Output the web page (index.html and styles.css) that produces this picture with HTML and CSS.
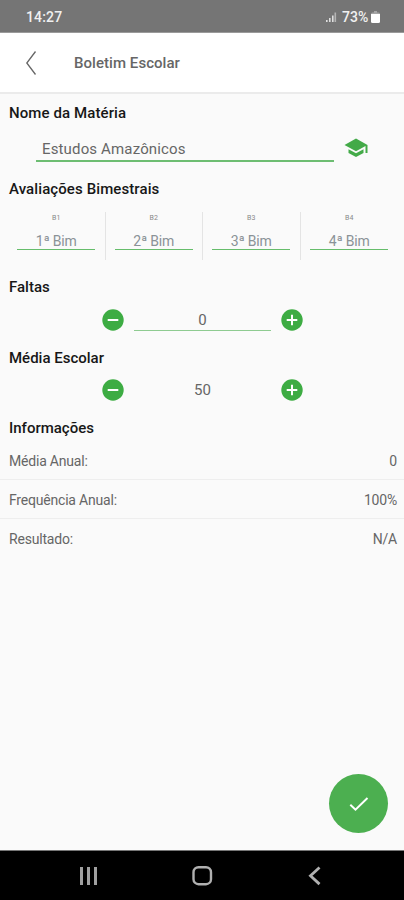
FILE: index.html
```html
<!DOCTYPE html>
<html lang="pt-BR">
<head>
<meta charset="utf-8">
<meta name="viewport" content="width=device-width, initial-scale=1">
<title>Boletim Escolar</title>
<link rel="stylesheet" href="styles.css">
</head>
<body>
<div class="status">
  <span class="clock">14:27</span>
  <svg class="signal" width="12" height="12" viewBox="0 0 12 12" fill="#dedede"><path d="M1 9h1.600v2H1zM4 7h1.600v4H4zM7 4.500h1.600V11H7z"/><path d="M9.500 1.500h1.600V11H9.500z" opacity=".6"/></svg>
  <span class="percent">73%</span>
  <svg class="battery" width="9" height="12" viewBox="0 0 9 12"><path d="M3 0h3v1.500h1.500Q9 1.500 9 3H0Q0 1.500 1.500 1.500H3z" fill="#a5a5a5"/><path d="M0 3h9v7.500Q9 12 7.500 12h-6Q0 12 0 10.500z" fill="#fff"/></svg>
</div>
<header class="topbar">
  <svg class="back" width="12" height="26" viewBox="0 0 12 26" fill="none" stroke="#666" stroke-width="1.300"><path d="M10.500 1.500 1.800 13l8.700 11.500"/></svg>
  <h1>Boletim Escolar</h1>
</header>
<main>
  <h2 class="t-subject">Nome da Matéria</h2>
  <div class="subject">
    <div class="subject-field">Estudos Amazônicos</div>
    <svg width="24" height="20" viewBox="0 0 24 20" fill="#43aa48"><path d="M12 .5.500 7 12 13.300 21.500 8.100V15H23.500V7z"/><path d="M4.500 11.200v3.700L12 19l7.500-4.100v-3.700L12 15.300z"/></svg>
  </div>
  <h2 class="t-grades">Avaliações Bimestrais</h2>
  <div class="grades">
    <div class="grade"><small>B1</small><span>1ª Bim</span></div>
    <div class="grade"><small>B2</small><span>2ª Bim</span></div>
    <div class="grade"><small>B3</small><span>3ª Bim</span></div>
    <div class="grade"><small>B4</small><span>4ª Bim</span></div>
  </div>
  <h2 class="t-absences">Faltas</h2>
  <div class="stepper">
    <svg width="22" height="22" viewBox="0 0 22 22"><circle cx="11" cy="11" r="10.700" fill="#3dac43"/><path d="M5.700 11h10.600" stroke="#fff" stroke-width="2"/></svg>
    <span class="value underlined">0</span>
    <svg width="22" height="22" viewBox="0 0 22 22"><circle cx="11" cy="11" r="10.700" fill="#3dac43"/><path d="M5.700 11h10.600M11 5.700v10.600" stroke="#fff" stroke-width="2"/></svg>
  </div>
  <h2 class="t-average">Média Escolar</h2>
  <div class="stepper average">
    <svg width="22" height="22" viewBox="0 0 22 22"><circle cx="11" cy="11" r="10.700" fill="#3dac43"/><path d="M5.700 11h10.600" stroke="#fff" stroke-width="2"/></svg>
    <span class="value">50</span>
    <svg width="22" height="22" viewBox="0 0 22 22"><circle cx="11" cy="11" r="10.700" fill="#3dac43"/><path d="M5.700 11h10.600M11 5.700v10.600" stroke="#fff" stroke-width="2"/></svg>
  </div>
  <h2 class="t-info">Informações</h2>
  <dl class="info">
    <div><dt>Média Anual:</dt><dd>0</dd></div>
    <div><dt>Frequência Anual:</dt><dd>100%</dd></div>
    <div><dt>Resultado:</dt><dd>N/A</dd></div>
  </dl>
  <button class="fab" aria-label="Salvar"><svg width="22" height="18" viewBox="0 0 22 18" fill="none" stroke="#fff" stroke-width="2"><path d="m2.300 9.700 5.200 5L19.500 3"/></svg></button>
</main>
<nav class="navbar">
  <svg width="20" height="20" viewBox="0 0 20 20" stroke="#a0a0a0" stroke-width="3"><path d="M2.500 1v18M9.500 1v18M16.500 1v18"/></svg>
  <svg width="22" height="20" viewBox="0 0 22 20" fill="none" stroke="#b0b0b0" stroke-width="2.400"><rect x="1.500" y="1.200" width="17.500" height="17" rx="5"/></svg>
  <svg width="14" height="20" viewBox="0 0 14 20" fill="none" stroke="#b0b0b0" stroke-width="2.800"><path d="m12.500 1.500-9 8.300 9 8.300"/></svg>
</nav>
</body>
</html>
```
FILE: styles.css
```css
* { box-sizing: border-box; }
body {
  margin: 0;
  width: 404px;
  height: 900px;
  display: flex;
  flex-direction: column;
  background: #fafafa;
  color: #666;
  font-family: Roboto, "Liberation Sans", sans-serif;
}
svg { display: block; flex: none; }
.status {
  height: 33px;
  flex: none;
  display: flex;
  align-items: center;
  padding: 1px 24px 0 26px;
  background: #757575;
  border-bottom: 1px solid #9a9a9a;
  color: #f0f0f0;
  font-size: 14px;
  font-weight: 500;
}
.clock { flex: 1; letter-spacing: .15px; }
.signal { margin-right: 5px; }
.percent { width: 28px; margin-right: 1px; letter-spacing: .1px; }
.topbar {
  height: 61px;
  flex: none;
  display: flex;
  align-items: center;
  padding-left: 25px;
  background: #fff;
  border-bottom: 2px solid #ebebeb;
}
.topbar h1 {
  margin: 1px 0 0 37px;
  font-size: 15px;
  font-weight: 500;
  letter-spacing: .05px;
  color: #666;
}
main {
  flex: 1;
  position: relative;
  display: flex;
  flex-direction: column;
}
h2 {
  margin: 0;
  padding-left: 9px;
  height: 40px;
  line-height: 40px;
  font-size: 15px;
  font-weight: 500;
  color: #171717;
  white-space: nowrap;
}
.t-subject { height: 39px; line-height: 38px; letter-spacing: .1px; }
.subject {
  height: 36px;
  display: flex;
  gap: 10px;
  padding-left: 36px;
}
.subject-field {
  width: 298px;
  height: 29px;
  padding-left: 6px;
  line-height: 32px;
  border-bottom: 2px solid #6dbd72;
  font-size: 15px;
  letter-spacing: .15px;
}
.subject svg { margin-top: 5px; }
.t-grades { letter-spacing: .1px; }
.grades {
  height: 58px;
  display: grid;
  grid-template-columns: repeat(4, 97.5px);
  padding: 3px 0 7px 8px;
}
.grade {
  display: flex;
  flex-direction: column;
  align-items: center;
  border-right: 1px solid #e4e4e4;
}
.grade:last-child { border-right: 0; }
.grade small {
  height: 20px;
  line-height: 12px;
  font-size: 7px;
  color: #888;
}
.grade span {
  width: 78px;
  height: 18px;
  line-height: 19px;
  border-bottom: 1px solid #66bd6b;
  text-align: center;
  font-size: 14px;
  color: #8a9297;
  letter-spacing: -.2px;
}
.stepper {
  height: 31px;
  display: flex;
  justify-content: center;
  align-items: flex-start;
  padding: 2px 0 0 1px;
}
.stepper.average { padding-top: 1px; }
.value {
  width: 137px;
  height: 22px;
  margin: 0 10px;
  line-height: 22px;
  text-align: center;
  font-size: 15px;
}
.value.underlined { border-bottom: 1px solid #8ecb91; }
.t-info { height: 32px; line-height: 38px; }
.info { margin: 0; font-size: 14px; letter-spacing: -.2px; }
.info div {
  height: 39px;
  padding: 1px 7px 0 9px;
  display: flex;
  justify-content: space-between;
  align-items: center;
  border-bottom: 1px solid #eee;
}
.info div:last-child { padding-top: 0; border-bottom: 0; }
.info dd { margin: 0; }
.fab {
  position: absolute;
  right: 16px;
  bottom: 17px;
  width: 59px;
  height: 59px;
  padding: 0;
  border: 0;
  border-radius: 50%;
  background: #4caf50;
  display: flex;
  align-items: center;
  justify-content: center;
}
.navbar {
  height: 50px;
  flex: none;
  display: flex;
  justify-content: space-between;
  align-items: center;
  padding: 1px 83px 0 79px;
  background: #000;
  border-top: 1px solid #777;
}
```
